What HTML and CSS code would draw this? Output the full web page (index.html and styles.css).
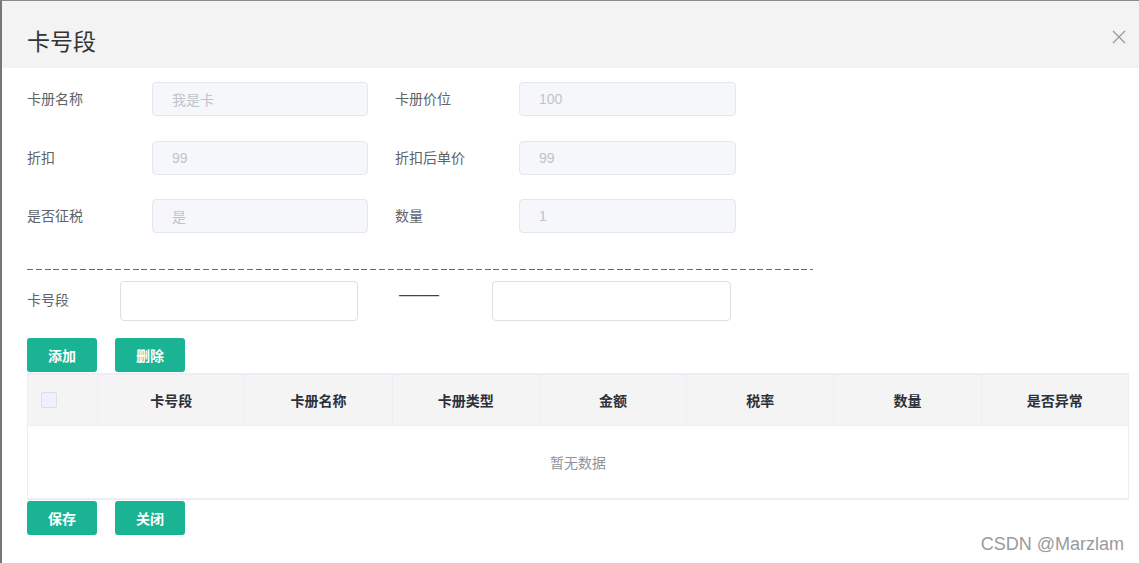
FILE: index.html
```html
<!DOCTYPE html>
<html lang="zh-CN">
<head>
    <meta charset="UTF-8">
    <meta name="viewport" content="width=device-width, initial-scale=1.0">
    <title>卡号段</title>
    <link rel="stylesheet" href="styles.css">
</head>
<body>
    <div class="dialog">
        <div class="dialog-header">
            <span class="dialog-title">卡号段</span>
            <span class="dialog-close">
                <svg width="14" height="14" viewBox="0 0 14 14"><path d="M1 1 L13 13 M13 1 L1 13" stroke="#9a9a9a" stroke-width="1.3" fill="none"/></svg>
            </span>
        </div>

        <div class="dialog-body">
            <!-- card info, read only -->
            <div class="form-row">
                <label class="label">卡册名称</label>
                <input class="input disabled" type="text" value="我是卡" disabled>
                <label class="label label-right">卡册价位</label>
                <input class="input input-right disabled" type="text" value="100" disabled>
            </div>
            <div class="form-row">
                <label class="label">折扣</label>
                <input class="input disabled" type="text" value="99" disabled>
                <label class="label label-right">折扣后单价</label>
                <input class="input input-right disabled" type="text" value="99" disabled>
            </div>
            <div class="form-row">
                <label class="label">是否征税</label>
                <input class="input disabled" type="text" value="是" disabled>
                <label class="label label-right">数量</label>
                <input class="input input-right disabled" type="text" value="1" disabled>
            </div>

            <div class="divider"></div>

            <!-- card number range -->
            <div class="range-row">
                <label class="range-label">卡号段</label>
                <input class="range-input" type="text">
                <span class="range-sep">——</span>
                <input class="range-input range-input-right" type="text">
            </div>

            <div class="btn-row">
                <button class="btn">添加</button>
                <button class="btn">删除</button>
            </div>

            <table class="grid">
                <thead>
                    <tr>
                        <th class="col-check"><span class="checkbox"></span></th>
                        <th>卡号段</th>
                        <th>卡册名称</th>
                        <th>卡册类型</th>
                        <th>金额</th>
                        <th>税率</th>
                        <th>数量</th>
                        <th>是否异常</th>
                    </tr>
                </thead>
                <tbody>
                    <tr>
                        <td class="empty" colspan="8">暂无数据</td>
                    </tr>
                </tbody>
            </table>

            <div class="btn-row footer">
                <button class="btn">保存</button>
                <button class="btn">关闭</button>
            </div>
        </div>
    </div>

    <div class="watermark">CSDN @Marzlam</div>
</body>
</html>
```

FILE: styles.css
```css
body {
    margin: 0;
    background-color: #fff;
    font-family: "Liberation Sans", "Noto Sans CJK SC", sans-serif;
    font-size: 14px;
    color: #606266;
}

.dialog {
    height: 562px;
    border-top: 1px solid #8a8a8a;
    border-left: 2px solid #777;
    background-color: #fff;
}

.dialog-header {
    height: 67px;
    background-color: #f3f3f3;
    display: flex;
    align-items: center;
    justify-content: space-between;
    padding: 0 13px 0 25px;
}

.dialog-title {
    font-size: 23px;
    color: #333;
    padding-top: 11px;
}

.dialog-close {
    display: flex;
    margin-top: 4px;
}

.dialog-body {
    padding: 14px 0 0 25px;
}

.form-row {
    display: flex;
    align-items: center;
    height: 34px;
    margin-bottom: 24px;
}

.form-row:first-child {
    margin-bottom: 25px;
}

.label {
    width: 125px;
    color: #606266;
    margin-top: -2px;
}

.label-right {
    margin-left: 27px;
    width: 124px;
}

.input {
    box-sizing: border-box;
    width: 216px;
    height: 34px;
    border: 1px solid #e4e7ed;
    border-radius: 4px;
    padding: 0 19px;
    font-family: inherit;
    font-size: 14px;
    outline: none;
}

.input-right {
    width: 217px;
}

.disabled {
    background-color: #f5f7fa;
    color: #c0c4cc;
}

.divider {
    width: 786px;
    height: 1px;
    margin: 36px 0 11px;
    background-image: repeating-linear-gradient(to right, #6a6a6a 0, #6a6a6a 6px, transparent 6px, transparent 8.8px);
}

.range-row {
    display: flex;
    align-items: center;
    height: 40px;
}

.range-label {
    width: 93px;
    margin-top: -5px;
}

.range-input {
    box-sizing: border-box;
    width: 238px;
    height: 40px;
    border: 1px solid #dcdfe6;
    border-radius: 4px;
    background-color: #fff;
    outline: none;
}

.range-input-right {
    width: 239px;
}

.range-sep {
    box-sizing: border-box;
    width: 134px;
    padding-left: 41px;
    color: #444;
    font-size: 20px;
    line-height: 1;
    margin-top: -14px;
}

.btn-row {
    display: flex;
    gap: 18px;
    margin-top: 17px;
}

.btn {
    width: 70px;
    height: 34px;
    border: none;
    border-radius: 3px;
    background-color: #1ab394;
    color: #fff;
    font-family: inherit;
    font-size: 14px;
    font-weight: bold;
    cursor: pointer;
}

.btn:hover {
    background-color: #18a689;
}

.grid {
    width: 1102px;
    margin-top: 1px;
    border-collapse: collapse;
    border: 1px solid #ebeef5;
    border-top: 2px solid #ebeef5;
    table-layout: fixed;
}

.grid th {
    height: 50px;
    background-color: #f4f4f4;
    border-right: 1px solid #ebeef5;
    border-bottom: 1px solid #ebeef5;
    color: #2b303b;
    font-weight: bold;
    font-size: 14px;
    text-align: center;
    padding: 0;
}

.grid th:last-child {
    border-right: none;
}

.grid .col-check {
    width: 69px;
    text-align: left;
}

.checkbox {
    display: block;
    box-sizing: border-box;
    width: 16px;
    height: 16px;
    margin-left: 13px;
    border: 1px solid #dcdfe6;
    border-radius: 2px;
    background-color: #edf2fc;
}

.empty {
    height: 72px;
    text-align: center;
    color: #909399;
    border-bottom: 2px solid #ebeef5;
    padding: 0;
}

.btn-row.footer {
    margin-top: 1px;
}

.watermark {
    position: absolute;
    right: 15px;
    top: 534px;
    font-size: 18px;
    color: #9a9a9a;
    text-shadow: 0 0 1px #fff;
}
```
